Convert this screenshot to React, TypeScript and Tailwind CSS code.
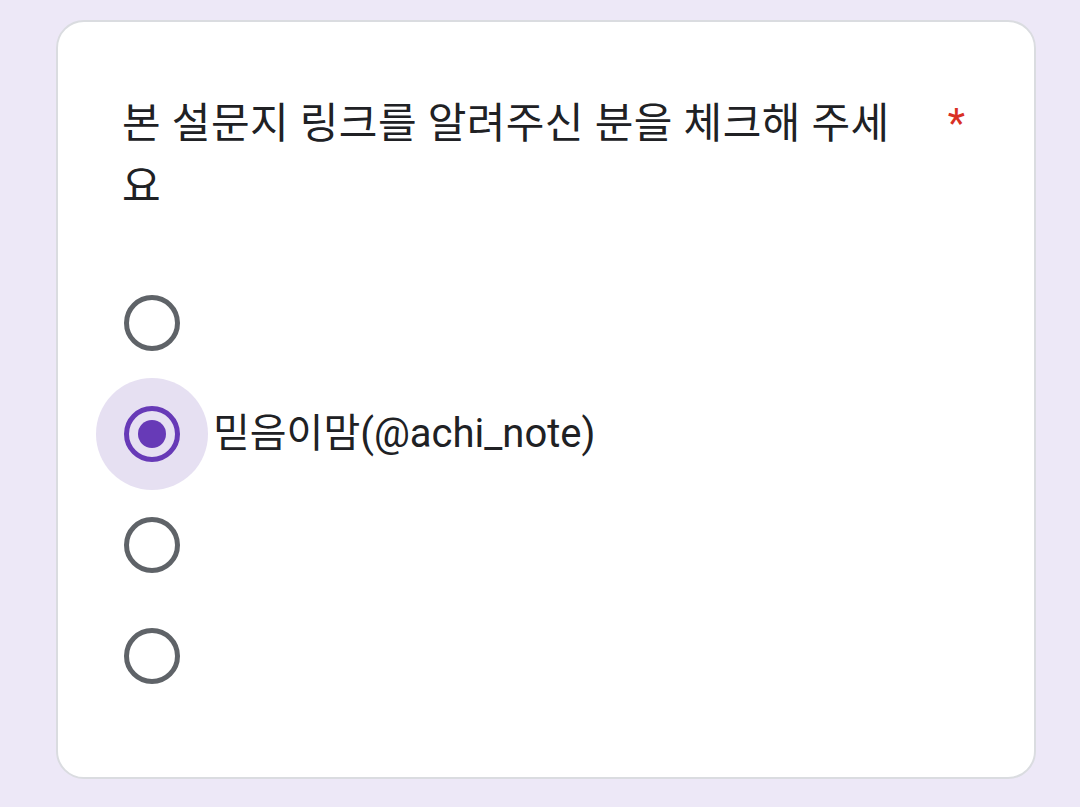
import React from "react";

const FONT = { fontFamily: 'Roboto, "Noto Sans CJK KR", "Noto Sans", sans-serif' };

function Radio({ selected }: { selected?: boolean }) {
  return (
    <div className={`w-[112px] h-[112px] rounded-full flex items-center justify-center shrink-0 ${selected ? "bg-[#e6e0f2]" : ""}`}>
      {selected ? (
        <div className="w-[56px] h-[56px] rounded-full border-[5px] border-[#673ab7] flex items-center justify-center">
          <div className="w-[28px] h-[28px] rounded-full bg-[#673ab7]" />
        </div>
      ) : (
        <div className="w-[56px] h-[56px] rounded-full border-[5px] border-[#5f6368]" />
      )}
    </div>
  );
}

export default function App() {
  const options = [
    { label: "", selected: false },
    { label: "믿음이맘(@achi_note)", selected: true },
    { label: "", selected: false },
    { label: "", selected: false },
  ];
  return (
    <div className="w-[1080px] h-[807px] bg-[#ede8f7] pt-[20px] pl-[56px]" style={FONT}>
      <div className="w-[980px] h-[759px] bg-white border-2 border-[#dadce0] rounded-[28px] pt-[70px] pr-[69px] pl-[64px]">
        <div className="flex items-start">
          <div className="w-[800px] text-[42px] tracking-[0.4px] leading-[63px] text-[#202124]">
            본 설문지 링크를 알려주신 분을 체크해 주세요
          </div>
          <div className="ml-auto text-[40px] leading-[63px] text-[#d93025]">*</div>
        </div>
        <div className="mt-[49px] -ml-[26px] flex flex-col">
          {options.map((o, i) => (
            <div key={i} className="h-[111px] flex items-center">
              <Radio selected={o.selected} />
              <span className="ml-[5px] text-[40px] text-[#202124]">{o.label}</span>
            </div>
          ))}
        </div>
      </div>
    </div>
  );
}
